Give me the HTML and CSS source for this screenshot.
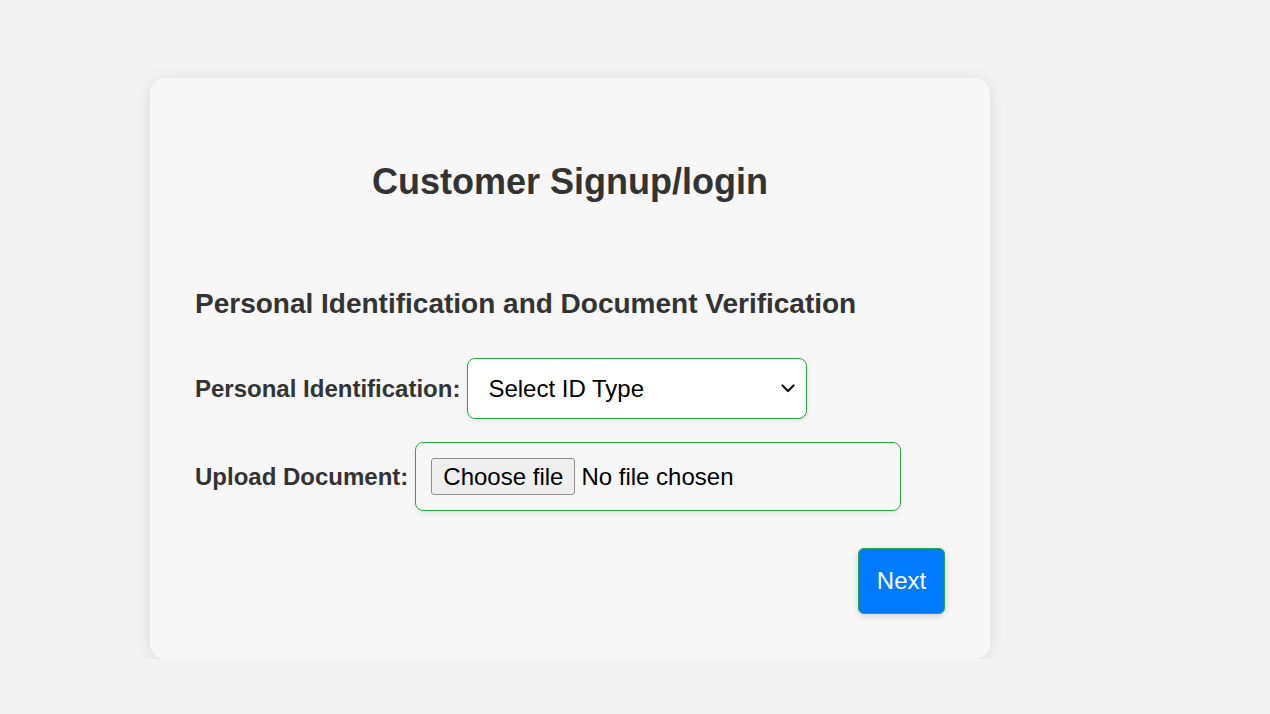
FILE: index.html
```html
<!DOCTYPE html>
<html lang="en">
<head>
<meta charset="utf-8">
<title>Customer Signup/login</title>
<link rel="stylesheet" href="styles.css">
</head>
<body>
<main class="page">
  <section class="card">
    <h2 class="title">Customer Signup/login</h2>
    <form class="form">
      <h3 class="section-title">Personal Identification and Document Verification</h3>
      <div class="row">
        <label class="label" for="idtype">Personal Identification:</label>
        <div class="select-wrap">
          <select id="idtype" class="select">
            <option>Select ID Type</option>
            <option>Passport</option>
            <option>Driver's License</option>
            <option>National ID</option>
          </select>
          <svg class="chevron" width="14" height="9" viewBox="0 0 14 9" aria-hidden="true">
            <path d="M1.5 1.5 L7 7 L12.5 1.5" fill="none" stroke="#111" stroke-width="2.2" stroke-linecap="round" stroke-linejoin="round"/>
          </svg>
        </div>
      </div>
      <div class="row row-upload">
        <label class="label" for="doc">Upload Document:</label>
        <div class="file-box">
          <label class="file-btn">Choose file<input id="doc" class="file-input" type="file"></label>
          <span class="file-name">No file chosen</span>
        </div>
      </div>
      <div class="actions">
        <button type="button" class="next">Next</button>
      </div>
    </form>
  </section>
</main>
</body>
</html>
```

FILE: styles.css
```css
html, body {
  margin: 0;
  padding: 0;
}
body {
  background: #f3f3f3;
  font-family: "Liberation Sans", Arial, sans-serif;
  color: #333333;
}
.page {
  padding: 78px 0 0 150px;
}
.card {
  width: 840px;
  box-sizing: border-box;
  background: #f7f7f7;
  border-radius: 15px;
  box-shadow: 0 2px 15px rgba(0, 0, 0, 0.1);
  padding: 83px 45px 45px 45px;
}
.title {
  margin: 0;
  font-size: 36px;
  font-weight: bold;
  text-align: center;
  line-height: 41px;
}
.form {
  margin: 0;
}
.section-title {
  margin: 86px 0 38px 0;
  font-size: 28px;
  font-weight: bold;
  line-height: 32px;
}
.row {
  display: flex;
  align-items: center;
}
.row-upload {
  margin-top: 23px;
}
.label {
  font-size: 24px;
  font-weight: bold;
  margin-right: 7px;
}
.select-wrap {
  position: relative;
}
.select {
  appearance: none;
  -webkit-appearance: none;
  display: block;
  width: 340px;
  height: 61px;
  box-sizing: border-box;
  border: 1.5px solid #28a745;
  border-radius: 8px;
  background: #ffffff;
  padding: 0 20px;
  font-family: "Liberation Sans", Arial, sans-serif;
  font-size: 24px;
  color: #000000;
  box-shadow: 0 2px 6px rgba(0, 0, 0, 0.08);
  outline: none;
}
.chevron {
  position: absolute;
  right: 12px;
  top: 26px;
  pointer-events: none;
}
.file-box {
  display: flex;
  align-items: center;
  gap: 6px;
  width: 486px;
  height: 69px;
  box-sizing: border-box;
  border: 1.5px solid #28a745;
  border-radius: 8px;
  padding: 0 15px;
  font-size: 24px;
  color: #000000;
  box-shadow: 0 2px 6px rgba(0, 0, 0, 0.08);
}
.file-btn {
  display: flex;
  align-items: center;
  height: 37px;
  box-sizing: border-box;
  padding: 0 11px;
  border: 1.5px solid #8f8f8f;
  border-radius: 3px;
  background: #efefef;
  color: #000000;
  cursor: pointer;
}
.file-input {
  display: none;
}
.file-name {
  color: #000000;
}
.actions {
  display: flex;
  justify-content: flex-end;
  margin-top: 37px;
}
.next {
  width: 87px;
  height: 66px;
  box-sizing: border-box;
  background: #007bff;
  color: #ffffff;
  border: 1.5px solid #28a745;
  border-radius: 6px;
  font-family: "Liberation Sans", Arial, sans-serif;
  font-size: 24px;
  padding: 0;
  box-shadow: 0 2px 6px rgba(0, 0, 0, 0.15);
  cursor: pointer;
}
```
